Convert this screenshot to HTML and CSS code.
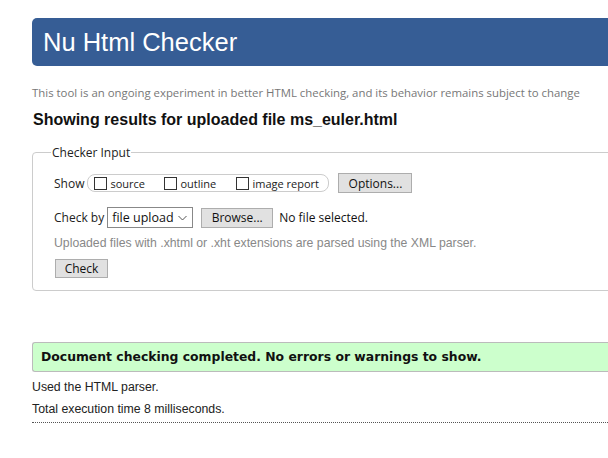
FILE: index.html
```html
<!DOCTYPE html>
<html>
<head>
<meta charset="utf-8">
<link rel="stylesheet" href="styles.css">
</head>
<body>
<div class="page">
  <h1 class="banner">Nu Html Checker</h1>
  <p class="intro">This tool is an ongoing experiment in better HTML checking, and its behavior remains subject to change</p>
  <h2 class="results-title">Showing results for uploaded file ms_euler.html</h2>
  <fieldset class="checker">
    <legend class="checker-legend">Checker Input</legend>
    <div class="row show-row">
      <span class="label">Show</span>
      <div class="show-group">
        <label class="opt"><span class="box"></span>source</label>
        <label class="opt"><span class="box"></span>outline</label>
        <label class="opt"><span class="box"></span>image report</label>
      </div>
      <span class="btn options-btn">Options...</span>
    </div>
    <div class="row check-row">
      <span class="label">Check by</span>
      <span class="select">file upload<svg class="chev" width="9" height="6" viewBox="0 0 9 6"><path d="M0.5 1 L4.5 5 L8.5 1" fill="none" stroke="#555" stroke-width="1"/></svg></span>
      <span class="btn browse-btn">Browse...</span>
      <span class="nofile">No file selected.</span>
    </div>
    <p class="hint">Uploaded files with .xhtml or .xht extensions are parsed using the XML parser.</p>
    <span class="btn check-btn">Check</span>
  </fieldset>
  <div class="success">Document checking completed. No errors or warnings to show.</div>
  <p class="meta">Used the HTML parser.</p>
  <p class="meta">Total execution time 8 milliseconds.</p>
  <hr class="dotted">
</div>
</body>
</html>
```
FILE: styles.css
```css
html, body {
  margin: 0;
  padding: 0;
  background: #fff;
  overflow: hidden;
}
.page {
  padding: 18px 0 0 32px;
  width: 700px;
  font-family: "Open Sans", sans-serif;
  color: #222;
}
.banner {
  margin: 0;
  height: 48px;
  box-sizing: border-box;
  background: #365d95;
  color: #fff;
  border-radius: 5px 0 0 5px;
  font-family: "Liberation Sans", Arial, sans-serif;
  font-weight: normal;
  font-size: 25.5px;
  line-height: 48px;
  padding-left: 11px;
}
.intro {
  margin: 19px 0 0;
  font-size: 11.4px;
  line-height: 16px;
  color: #777;
}
.results-title {
  margin: 9px 0 0 1px;
  font-family: "Liberation Sans", Arial, sans-serif;
  font-size: 16px;
  font-weight: bold;
  line-height: 20px;
  color: #111;
}
.checker {
  margin: 14px 0 0;
  border: 1px solid #ccc;
  border-radius: 4px;
  padding: 8px 0 12px 21px;
}
.checker-legend {
  font-size: 12px;
  color: #222;
  padding: 0 1px;
  margin-left: -3px;
}
.row {
  display: flex;
  align-items: center;
  font-size: 12px;
}
.show-row {
  margin-top: 4px;
}
.label {
  color: #222;
}
.show-group {
  display: flex;
  align-items: center;
  margin-left: 3px;
  width: 242px;
  box-sizing: border-box;
  height: 18px;
  border: 1px solid #ccc;
  border-radius: 8px;
  padding-left: 6px;
}
.opt {
  display: flex;
  align-items: center;
  font-size: 11px;
  color: #222;
}
.opt:nth-child(1) { width: 70px; }
.opt:nth-child(2) { width: 72px; }
.box {
  width: 11px;
  height: 11px;
  border: 1px solid #333;
  margin-right: 3px;
  background: #fff;
}
.btn {
  display: inline-flex;
  align-items: center;
  justify-content: center;
  box-sizing: border-box;
  background: #e1e1e1;
  border: 1px solid #adadad;
  font-size: 12px;
  color: #111;
  height: 20px;
}
.options-btn {
  margin-left: 9px;
  width: 74px;
}
.check-row {
  margin-top: 14px;
}
.select {
  display: inline-flex;
  align-items: center;
  justify-content: space-between;
  box-sizing: border-box;
  margin-left: 3px;
  width: 86px;
  height: 21px;
  border: 1px solid #888;
  padding: 0 5px 0 4px;
  font-size: 12.5px;
  color: #111;
}
.browse-btn {
  margin-left: 8px;
  width: 72px;
}
.nofile {
  margin-left: 6px;
  font-size: 12px;
  color: #111;
}
.hint {
  margin: 6px 0 0;
  font-family: "Liberation Sans", Arial, sans-serif;
  font-size: 12.25px;
  line-height: 18px;
  color: #888;
}
.check-btn {
  margin-top: 7px;
  margin-left: 1px;
  width: 53px;
  height: 19px;
}
.success {
  margin-top: 51px;
  height: 30px;
  box-sizing: border-box;
  background: #ccffcc;
  border: 1px solid #bbb;
  border-right: none;
  border-radius: 3px 0 0 3px;
  padding-left: 8px;
  font-family: "DejaVu Sans", Verdana, sans-serif;
  font-weight: bold;
  font-size: 12.4px;
  line-height: 28px;
  color: #111;
}
.meta {
  margin: 7px 0 0;
  font-family: "Liberation Sans", Arial, sans-serif;
  font-size: 12.3px;
  line-height: 16px;
  color: #222;
}
.meta + .meta {
  margin-top: 6px;
}
.dotted {
  margin: 5px 0 0;
  border: none;
  border-top: 1px dotted #555;
  height: 0;
}
```
